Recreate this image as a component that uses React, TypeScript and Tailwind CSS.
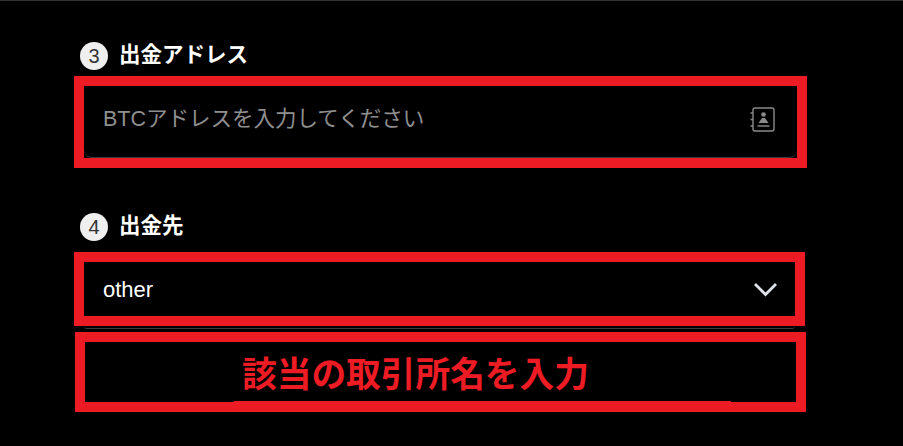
const sans = 'font-["Liberation_Sans","Noto_Sans_CJK_JP",sans-serif]'

const StepLabel = ({ step, label }: { step: number; label: string }) => (
  <div className="flex items-center h-7 pl-[80px]">
    <span className="flex items-center justify-center w-7 h-7 rounded-full bg-[#efefef] text-[#333] text-[20px]">
      {step}
    </span>
    <span className="ml-[11px] -mt-[2px] text-white font-bold text-[21.500px]">{label}</span>
  </div>
)

const AddressBookIcon = () => (
  <svg width="26" height="26" viewBox="0 0 26 26" fill="none">
    <rect x="4" y="1" width="21" height="23" rx="2" stroke="#8a8a8a" strokeWidth="1.4" />
    <path d="M1.500 6h2.500M1.500 12.500h2.500M1.500 19h2.500" stroke="#8a8a8a" strokeWidth="1.4" />
    <circle cx="14.500" cy="7.500" r="2.300" fill="#8a8a8a" />
    <path d="M9.500 16l3.500-5h3l3.500 5z" fill="#8a8a8a" />
    <path d="M8.500 19h12" stroke="#8a8a8a" strokeWidth="1.4" />
  </svg>
)

const Chevron = () => (
  <svg width="25" height="15" viewBox="0 0 25 15" fill="none">
    <path d="M2 2l10.500 10.500L23 2" stroke="#dfe3ea" strokeWidth="2.800" />
  </svg>
)

export default function App() {
  return (
    <div className={`relative w-[903px] h-[446px] overflow-hidden bg-black border-t border-[#333] ${sans}`}>
      <div className="pt-[41px]">
        <StepLabel step={3} label="出金アドレス" />
      </div>

      <div className="ml-[74px] mt-[6px] w-[733px] h-[92px] border-[10px] border-[#ed1c24]">
        <div className="h-full flex items-center justify-between pl-[19px] pr-[22px] pb-[4px] border-b border-[#3a3a3a] rounded-b-[8px]">
          <span className="text-[#8f8f8f] text-[21.500px]">BTCアドレスを入力してください</span>
          <AddressBookIcon />
        </div>
      </div>

      <div className="mt-[45px]">
        <StepLabel step={4} label="出金先" />
      </div>

      <div className="ml-[74px] mt-[11px] w-[731px] h-[74px] border-[10px] border-[#ed1c24] flex items-center justify-between pl-[19px] pr-[17px]">
        <span className="text-white text-[22px]">other</span>
        <Chevron />
      </div>

      <div className="ml-[84px] w-[711px] h-[3px] border-b border-[#3a3a3a] rounded-b-[6px]" />

      <div className="relative ml-[75px] mt-[3px] w-[731px] h-[80px] border-[10px] border-[#ed1c24] flex items-center pl-[157px] pt-[6px]">
        <span className="text-[#ed1c24] font-semibold text-[34.700px] leading-none">該当の取引所名を入力</span>
        <div className="absolute left-[149px] top-[59px] w-[497px] h-[10px] bg-[#ed1c24]" />
      </div>
    </div>
  )
}
